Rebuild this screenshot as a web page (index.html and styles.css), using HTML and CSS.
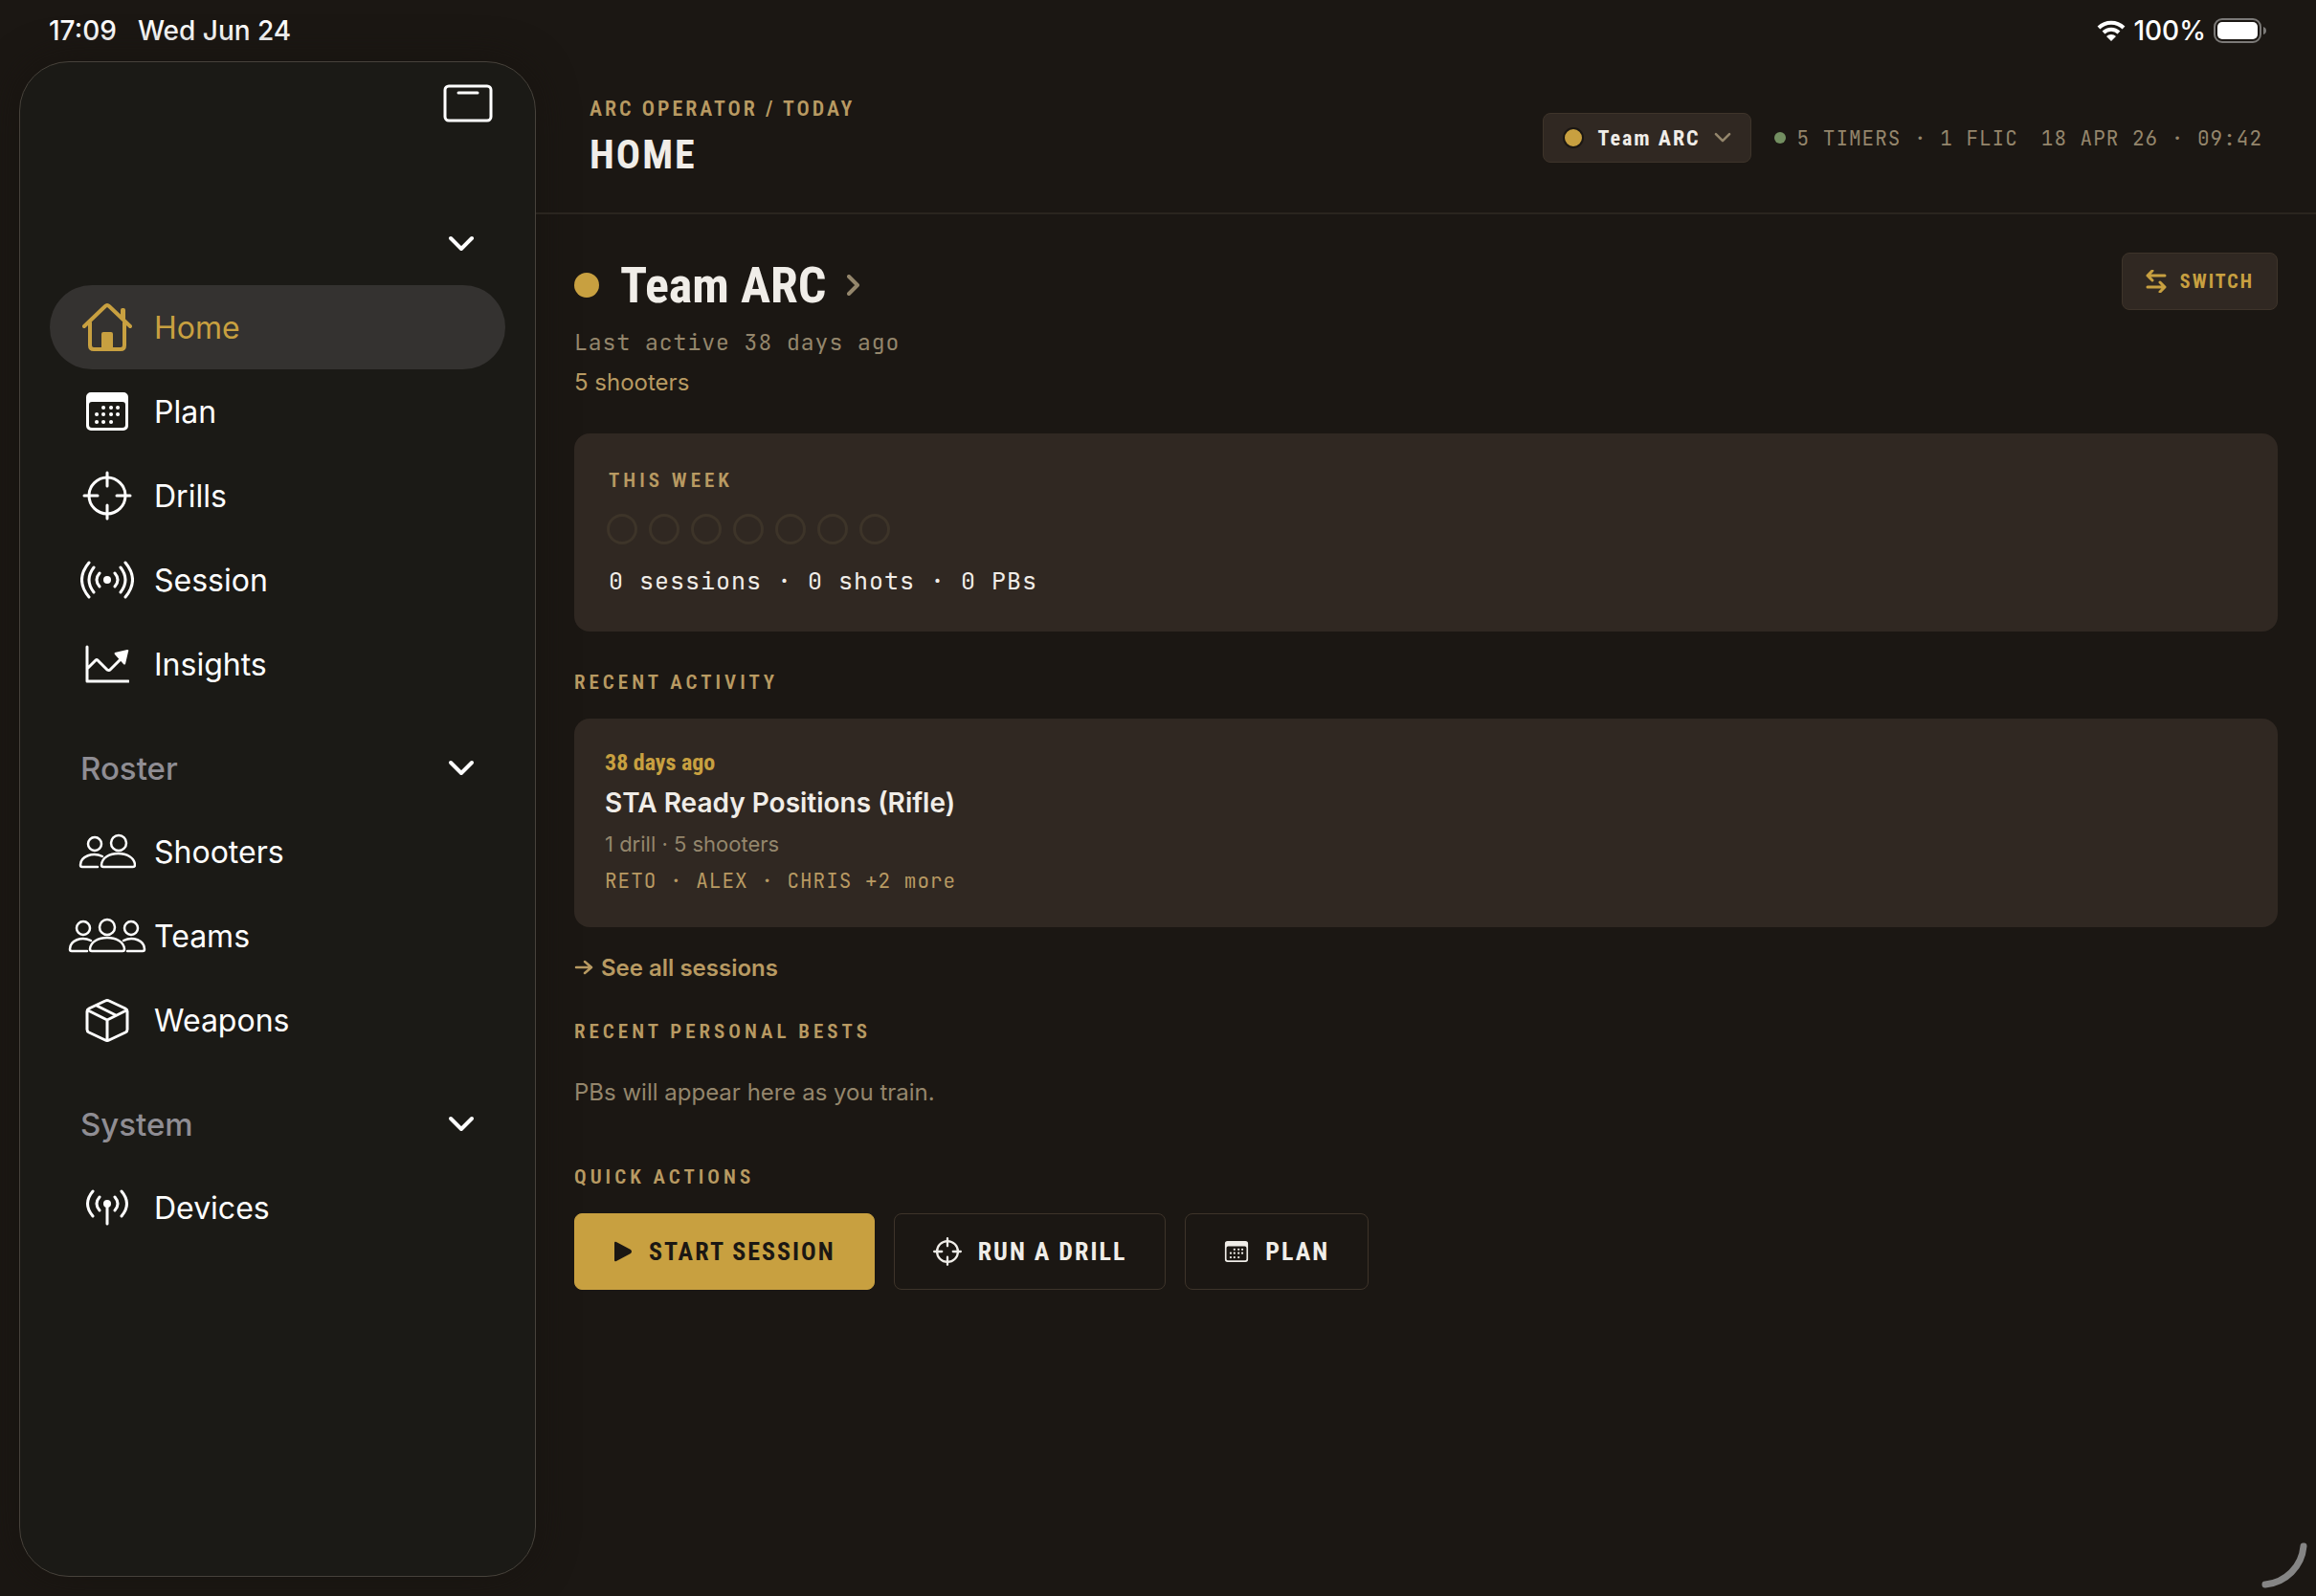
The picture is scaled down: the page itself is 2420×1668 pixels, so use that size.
FILE: index.html
```html
<!DOCTYPE html>
<html lang="en">
<head>
    <meta charset="utf-8">
    <title>ARC Operator</title>
    <link rel="stylesheet" href="styles.css">
</head>
<body>
    <!-- shared icons -->
    <svg class="sprite" aria-hidden="true">
        <symbol id="icon-chevron" viewBox="0 0 28 18">
            <path d="M3 3l11 11L25 3" fill="none" stroke="currentColor" stroke-width="4" stroke-linecap="round" stroke-linejoin="round"/>
        </symbol>
        <symbol id="icon-calendar" viewBox="0 0 44 40">
            <path fill="currentColor" fill-rule="evenodd" d="M5 0h34a5 5 0 0 1 5 5v30a5 5 0 0 1-5 5H5a5 5 0 0 1-5-5V5a5 5 0 0 1 5-5zM6 10a3 3 0 0 0-3 3v21a3 3 0 0 0 3 3h32a3 3 0 0 0 3-3V13a3 3 0 0 0-3-3z"/>
            <path d="M18 16h.1M26 16h.1M33 16h.1M11 23h.1M18 23h.1M26 23h.1M33 23h.1M11 31h.1M18 31h.1M26 31h.1" fill="none" stroke="currentColor" stroke-width="4" stroke-linecap="round"/>
        </symbol>
        <symbol id="icon-target" viewBox="0 0 52 52">
            <g fill="none" stroke="currentColor" stroke-linecap="round">
                <circle cx="26" cy="26" r="19"/>
                <path d="M26 2v14M26 36v14M2 26h14M36 26h14"/>
            </g>
        </symbol>
    </svg>

    <header class="status-bar">
        <div class="status-group">
            <span>17:09</span>
            <span>Wed Jun 24</span>
        </div>
        <div class="status-group status-right">
            <svg width="30" height="22" viewBox="0 0 30 22" aria-hidden="true">
                <path d="M2 8a18.500 18.500 0 0 1 26 0M7 13a11.500 11.500 0 0 1 16 0" fill="none" stroke="#fff" stroke-width="4"/>
                <path d="M15 22l-5-5a7 7 0 0 1 10 0z" fill="#fff"/>
            </svg>
            <span>100%</span>
            <svg width="56" height="26" viewBox="0 0 56 26" aria-hidden="true">
                <rect x="1" y="1" width="48" height="24" rx="8" fill="none" stroke="#7b7977" stroke-width="2"/>
                <rect x="4" y="4" width="42" height="18" rx="5" fill="#fff"/>
                <path d="M52 9q3 1 3 4t-3 4z" fill="#7b7977"/>
            </svg>
        </div>
    </header>

    <div class="app">
        <aside class="sidebar">
            <button class="sidebar-toggle" aria-label="Toggle sidebar">
                <svg width="52" height="40" viewBox="0 0 52 40">
                    <rect x="2" y="2" width="48" height="36" rx="4" fill="none" stroke="currentColor" stroke-width="3"/>
                    <path d="M16 9h20" stroke="currentColor" stroke-width="3" stroke-linecap="round"/>
                </svg>
            </button>
            <nav>
                <section class="nav-section">
                    <button class="nav-heading" aria-label="Collapse section">
                        <span></span>
                        <svg class="nav-chevron"><use href="#icon-chevron"/></svg>
                    </button>
                    <a class="nav-item active" href="#">
                        <span class="nav-icon">
                            <svg width="52" height="52" viewBox="0 0 52 52">
                                <g fill="none" stroke="currentColor" stroke-width="4" stroke-linecap="round" stroke-linejoin="round">
                                    <path d="M2 25L24 4q2-2 4 0L50 25M8 21v24q0 4 4 4h28q4 0 4-4V21"/>
                                </g>
                                <path d="M20 50V33q0-2 2-2h8q2 0 2 2v17zM40 15V8q0-2 2-2h1q2 0 2 2v12z" fill="currentColor"/>
                            </svg>
                        </span>
                        Home
                    </a>
                    <a class="nav-item" href="#">
                        <span class="nav-icon"><svg width="44" height="40"><use href="#icon-calendar"/></svg></span>
                        Plan
                    </a>
                    <a class="nav-item" href="#">
                        <span class="nav-icon"><svg class="icon-target" width="52" height="52"><use href="#icon-target"/></svg></span>
                        Drills
                    </a>
                    <a class="nav-item" href="#">
                        <span class="nav-icon">
                            <svg width="56" height="40" viewBox="0 0 56 40">
                                <circle cx="28" cy="20" r="4" fill="currentColor"/>
                                <path d="M20 13q-6 7 0 14M14 7q-10 13 0 26M9 2q-15 18 0 36M36 13q6 7 0 14M42 7q10 13 0 26M47 2q15 18 0 36" fill="none" stroke="currentColor" stroke-width="3" stroke-linecap="round"/>
                            </svg>
                        </span>
                        Session
                    </a>
                    <a class="nav-item" href="#">
                        <span class="nav-icon">
                            <svg width="46" height="40" viewBox="0 0 46 40">
                                <path d="M2 2v36h43M2 25l9-9q1-1 2 0l10 10q2 1 3 0L39 13" fill="none" stroke="currentColor" stroke-width="3" stroke-linecap="round" stroke-linejoin="round"/>
                                <path d="M31 8l13-3q2 0 1 2l-3 13q-1 1-2 0l-9-10q-1-1 0-2z" fill="currentColor"/>
                            </svg>
                        </span>
                        Insights
                    </a>
                </section>

                <section class="nav-section">
                    <button class="nav-heading">
                        <span>Roster</span>
                        <svg class="nav-chevron"><use href="#icon-chevron"/></svg>
                    </button>
                    <a class="nav-item" href="#">
                        <span class="nav-icon">
                            <svg width="60" height="38" viewBox="0 0 60 38">
                                <g fill="none" stroke="currentColor" stroke-width="2.500" stroke-linecap="round">
                                    <circle cx="17" cy="11" r="7"/>
                                    <path d="M25 24c-10-5-23 0-23 9q0 2 2 2h16"/>
                                    <circle cx="42" cy="10" r="8"/>
                                    <path d="M26 35q-2 0-2-2c1-16 34-16 35 0q0 2-2 2z"/>
                                </g>
                            </svg>
                        </span>
                        Shooters
                    </a>
                    <a class="nav-item" href="#">
                        <span class="nav-icon">
                            <svg width="82" height="38" viewBox="0 0 82 38">
                                <g fill="none" stroke="currentColor" stroke-width="2.500" stroke-linecap="round">
                                    <circle cx="16" cy="11" r="7"/>
                                    <path d="M24 24c-10-5-22 0-22 9q0 2 2 2h16"/>
                                    <circle cx="66" cy="11" r="7"/>
                                    <path d="M58 24c10-5 22 0 22 9q0 2-2 2H62"/>
                                    <circle cx="41" cy="10" r="8"/>
                                    <path d="M25 35q-2 0-2-2c1-16 35-16 36 0q0 2-2 2z"/>
                                </g>
                            </svg>
                        </span>
                        Teams
                    </a>
                    <a class="nav-item" href="#">
                        <span class="nav-icon">
                            <svg width="46" height="46" viewBox="0 0 46 46">
                                <path d="M21 3q2-1 4 0l17 8q2 1 2 3v19q0 2-2 3l-17 8q-2 1-4 0L4 36q-2-1-2-3V14q0-2 2-3zM3 13l20 10 20-10M23 23v21M12 8l20 10" fill="none" stroke="currentColor" stroke-width="3" stroke-linejoin="round"/>
                            </svg>
                        </span>
                        Weapons
                    </a>
                </section>

                <section class="nav-section">
                    <button class="nav-heading">
                        <span>System</span>
                        <svg class="nav-chevron"><use href="#icon-chevron"/></svg>
                    </button>
                    <a class="nav-item" href="#">
                        <span class="nav-icon">
                            <svg width="48" height="40" viewBox="0 0 48 40">
                                <circle cx="24" cy="16" r="4" fill="currentColor"/>
                                <path d="M24 16v21M16 9q-6 7 0 14M9 3q-11 13 0 26M32 9q6 7 0 14M39 3q11 13 0 26" fill="none" stroke="currentColor" stroke-width="3" stroke-linecap="round"/>
                            </svg>
                        </span>
                        Devices
                    </a>
                </section>
            </nav>
        </aside>

        <main class="main">
            <div class="topbar">
                <div class="topbar-left">
                    <div class="label crumbs">ARC OPERATOR / TODAY</div>
                    <h1 class="page-title">HOME</h1>
                </div>
                <div class="topbar-right">
                    <button class="chip team-chip">
                        <span class="dot dot-chip"></span>
                        Team ARC
                        <svg class="chip-chevron" width="18" height="12"><use href="#icon-chevron"/></svg>
                    </button>
                    <span class="meta">
                        <span class="dot dot-online"></span>
                        5 TIMERS · 1 FLIC
                    </span>
                    <span class="meta">18 APR 26 · 09:42</span>
                </div>
            </div>

            <div class="content">
                <div class="team-row">
                    <div>
                        <a class="team-link" href="#">
                            <span class="dot dot-team"></span>
                            <h2 class="team-name">Team ARC</h2>
                            <svg class="team-arrow" width="14" height="22" viewBox="0 0 14 22">
                                <path d="M2 2l9 9-9 9" fill="none" stroke="currentColor" stroke-width="4" stroke-linecap="round" stroke-linejoin="round"/>
                            </svg>
                        </a>
                        <div class="last-active">Last active 38 days ago</div>
                        <div class="shooter-count">5 shooters</div>
                    </div>
                    <button class="chip switch-button">
                        <svg width="22" height="24" viewBox="0 0 22 24">
                            <path d="M7 1L2 6l5 5M2 6h18M15 13l5 5-5 5M20 18H2" fill="none" stroke="currentColor" stroke-width="3" stroke-linecap="round" stroke-linejoin="round"/>
                        </svg>
                        SWITCH
                    </button>
                </div>

                <section class="card week-card">
                    <h3 class="label">THIS WEEK</h3>
                    <div class="week-days">
                        <span></span><span></span><span></span><span></span><span></span><span></span><span></span>
                    </div>
                    <div class="week-stats">0 sessions · 0 shots · 0 PBs</div>
                </section>

                <h3 class="label label-recent">RECENT ACTIVITY</h3>
                <article class="card activity-card">
                    <div class="activity-when">38 days ago</div>
                    <div class="activity-title">STA Ready Positions (Rifle)</div>
                    <div class="activity-info">1 drill · 5 shooters</div>
                    <div class="activity-people">RETO · ALEX · CHRIS +2 more</div>
                </article>
                <a class="see-all" href="#">
                    <svg width="20" height="16" viewBox="0 0 20 16">
                        <path d="M2 8h16M11 2l7 6-7 6" fill="none" stroke="currentColor" stroke-width="2.500" stroke-linecap="round" stroke-linejoin="round"/>
                    </svg>
                    See all sessions
                </a>

                <h3 class="label label-bests">RECENT PERSONAL BESTS</h3>
                <p class="empty">PBs will appear here as you train.</p>

                <h3 class="label label-actions">QUICK ACTIONS</h3>
                <div class="actions">
                    <button class="action primary">
                        <svg width="20" height="22" viewBox="0 0 20 22"><path d="M1 2q0-2 2-1l15 8q2 2 0 4L3 21q-2 1-2-1z" fill="currentColor"/></svg>
                        START SESSION
                    </button>
                    <button class="action">
                        <svg class="icon-target-small" width="30" height="30"><use href="#icon-target"/></svg>
                        RUN A DRILL
                    </button>
                    <button class="action">
                        <svg width="26" height="22"><use href="#icon-calendar"/></svg>
                        PLAN
                    </button>
                </div>
            </div>
        </main>
    </div>

    <svg class="corner-handle" width="48" height="48" viewBox="0 0 48 48" aria-hidden="true">
        <path d="M44 4A44 44 0 0 1 4 44" fill="none" stroke="#858585" stroke-width="7" stroke-linecap="round"/>
    </svg>
</body>
</html>
```
FILE: styles.css
```css
* {
    box-sizing: border-box;
}

body {
    margin: 0;
    min-height: 100vh;
    display: flex;
    flex-direction: column;
    background-color: #1b1713;
    color: #f0ede8;
    font-family: Inter, sans-serif;
    font-size: 24px;
}

h1, h2, h3, p {
    margin: 0;
}

button {
    font: inherit;
    color: inherit;
    background: none;
    border: none;
    padding: 0;
}

a {
    color: inherit;
    text-decoration: none;
}

svg {
    display: block;
    flex: none;
}

.sprite {
    position: absolute;
    width: 0;
    height: 0;
}

.icon-target {
    stroke-width: 3;
}

.icon-target-small {
    stroke-width: 4;
}

/* status bar */
.status-bar {
    display: flex;
    justify-content: space-between;
    height: 64px;
    padding: 0 51px;
    color: #fff;
    font-size: 28px;
    font-weight: 500;
}

.status-group {
    display: flex;
    align-items: center;
    gap: 22px;
}

.status-right {
    gap: 8px;
}

.app {
    flex: 1;
    display: flex;
}

/* sidebar */
.sidebar {
    flex: none;
    width: 540px;
    margin: 0 0 20px 20px;
    padding: 23px 31px;
    border: 1px solid #47423b;
    border-radius: 52px;
    background-color: #1b1a16;
    box-shadow: 0 0 40px #181410;
    color: #fff;
    font-size: 32px;
}

.sidebar-toggle {
    display: block;
    margin: 0 13px 82px auto;
}

.nav-section {
    margin-bottom: 20px;
}

.nav-heading {
    display: flex;
    align-items: center;
    justify-content: space-between;
    width: 100%;
    height: 88px;
    padding: 1px 32px 0;
    color: #8f8d93;
    font-size: 33px;
    font-weight: 500;
}

.nav-chevron {
    width: 28px;
    height: 18px;
    color: #fff;
}

.nav-item {
    display: flex;
    align-items: center;
    gap: 8px;
    height: 88px;
    padding-left: 19px;
    border-radius: 44px;
}

.nav-item.active {
    background-color: #343230;
    color: #c8a040;
}

.nav-icon {
    display: flex;
    justify-content: center;
    width: 82px;
}

/* top bar */
.main {
    flex: 1;
    min-width: 0;
}

.topbar {
    display: flex;
    align-items: center;
    justify-content: space-between;
    height: 160px;
    padding: 2px 56px 0;
    border-bottom: 2px solid #2a251f;
}

.topbar-left {
    padding-top: 8px;
}

.label,
.page-title,
.chip,
.team-name,
.activity-when,
.action {
    font-family: "Roboto Condensed", "Liberation Sans Narrow", Roboto, sans-serif;
    font-weight: 700;
}

.label {
    color: #b89a62;
    font-size: 21px;
    font-weight: 600;
    line-height: 28px;
    letter-spacing: 4px;
}

.crumbs {
    font-size: 22px;
    letter-spacing: 3px;
}

.page-title {
    font-size: 42px;
    line-height: 68px;
    letter-spacing: 2px;
}

.topbar-right {
    display: flex;
    align-items: center;
    gap: 24px;
}

.dot {
    flex: none;
    border-radius: 50%;
    background-color: #c8a040;
}

.dot-chip {
    width: 22px;
    height: 22px;
    border: 2px solid #1b1713;
}

.dot-online {
    width: 12px;
    height: 12px;
    background-color: #738f61;
}

.dot-team {
    width: 26px;
    height: 26px;
}

.chip {
    display: flex;
    align-items: center;
    gap: 14px;
    border: 1px solid #3e342a;
    border-radius: 8px;
    background-color: #302822;
}

.team-chip {
    height: 52px;
    padding: 0 20px;
    font-size: 22px;
    letter-spacing: 2px;
}

.chip-chevron,
.team-arrow {
    color: #94866c;
}

.meta,
.last-active,
.week-stats,
.activity-people {
    font-family: "JetBrains Mono", "Roboto Mono", "Noto Sans Mono", "DejaVu Sans Mono", monospace;
    letter-spacing: 1px;
}

.meta {
    display: flex;
    align-items: center;
    gap: 12px;
    color: #94866c;
    font-size: 21px;
}

/* content */
.content {
    padding: 40px;
}

.team-row {
    display: flex;
    align-items: flex-start;
    justify-content: space-between;
    margin-bottom: 37px;
}

.team-link {
    display: flex;
    align-items: center;
    gap: 22px;
    height: 68px;
}

.team-name {
    font-size: 52px;
}

.last-active {
    color: #94866c;
    font-size: 23px;
    line-height: 52px;
}

.shooter-count {
    color: #b89a62;
    line-height: 32px;
}

.switch-button {
    height: 60px;
    padding: 0 24px;
    color: #c8a040;
    font-size: 20px;
    letter-spacing: 2px;
}

.card {
    border-radius: 16px;
    background-color: #302822;
}

.week-card {
    padding: 35px 36px;
}

.week-days {
    display: flex;
    gap: 12px;
    margin: 21px -2px 20px;
}

.week-days span {
    width: 32px;
    height: 32px;
    border: 3px solid #3d3429;
    border-radius: 50%;
}

.week-stats {
    font-size: 25px;
    line-height: 36px;
}

.label-recent {
    margin: 39px 0 24px;
}

.activity-card {
    padding: 28px 32px;
}

.activity-when {
    color: #c8a040;
    font-size: 24px;
    line-height: 36px;
}

.activity-title {
    font-size: 28px;
    font-weight: 600;
    line-height: 48px;
}

.activity-info {
    color: #94866c;
    font-size: 22px;
    line-height: 38px;
}

.activity-people {
    color: #b89a62;
    font-size: 21px;
    line-height: 40px;
}

.see-all {
    display: flex;
    align-items: center;
    gap: 8px;
    height: 84px;
    color: #b89a62;
    font-weight: 600;
}

.label-bests {
    margin: 11px 0 30px;
}

.empty {
    color: #94866c;
    line-height: 40px;
}

.label-actions {
    margin: 54px 0 24px;
}

.actions {
    display: flex;
    gap: 20px;
}

.action {
    display: flex;
    align-items: center;
    gap: 17px;
    height: 80px;
    padding: 0 40px;
    border: 1px solid #3e342a;
    border-radius: 8px;
    font-size: 26px;
    letter-spacing: 2px;
}

.action.primary {
    background-color: #c8a040;
    border-color: #c8a040;
    color: #1b1713;
}

/* resize handle over the page corner */
.corner-handle {
    position: absolute;
    right: 9px;
    bottom: 8px;
}
```
